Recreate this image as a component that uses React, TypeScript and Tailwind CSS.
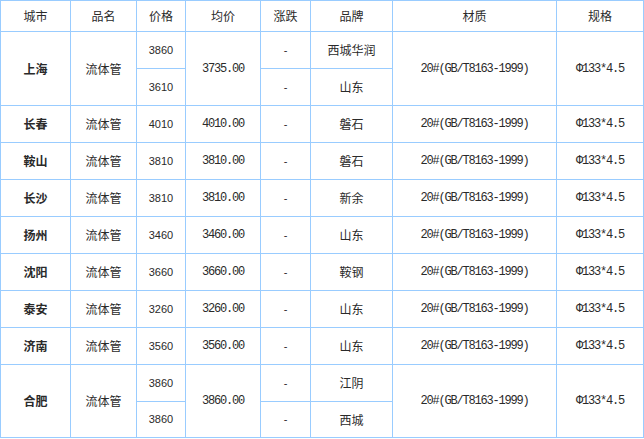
import React from "react";

type Row = {
  city: string;
  prices: string[];
  avg: string;
  brands: string[];
};

const rows: Row[] = [
  { city: "上海", prices: ["3860", "3610"], avg: "3735.00", brands: ["西城华润", "山东"] },
  { city: "长春", prices: ["4010"], avg: "4010.00", brands: ["磐石"] },
  { city: "鞍山", prices: ["3810"], avg: "3810.00", brands: ["磐石"] },
  { city: "长沙", prices: ["3810"], avg: "3810.00", brands: ["新余"] },
  { city: "扬州", prices: ["3460"], avg: "3460.00", brands: ["山东"] },
  { city: "沈阳", prices: ["3660"], avg: "3660.00", brands: ["鞍钢"] },
  { city: "泰安", prices: ["3260"], avg: "3260.00", brands: ["山东"] },
  { city: "济南", prices: ["3560"], avg: "3560.00", brands: ["山东"] },
  { city: "合肥", prices: ["3860", "3860"], avg: "3860.00", brands: ["江阴", "西城"] },
];

const cjk = "font-['Noto_Sans_CJK_SC',sans-serif]";
const mono = "font-['Liberation_Mono','Noto_Sans_CJK_SC',monospace] text-[12px] tracking-[-1.2px]";
const num = "font-['Liberation_Sans',sans-serif] text-[11px]";
const td = "border border-[#99ccff] text-center align-middle p-0";

export default function App() {
  return (
    <div className="bg-white w-[644px] h-[439px] text-[#2a2a2a]">
      <table className="table-fixed border-collapse w-[643px] text-[12px]">
        <colgroup>
          <col className="w-[70px]" />
          <col className="w-[66px]" />
          <col className="w-[49px]" />
          <col className="w-[75px]" />
          <col className="w-[50px]" />
          <col className="w-[82px]" />
          <col className="w-[164px]" />
          <col className="w-[87px]" />
        </colgroup>
        <thead>
          <tr className="h-[31px]">
            {["城市", "品名", "价格", "均价", "涨跌", "品牌", "材质", "规格"].map((h) => (
              <th key={h} className={`${td} ${cjk} font-normal`}>
                {h}
              </th>
            ))}
          </tr>
        </thead>
        <tbody>
          {rows.map((r, ri) => {
            const span = r.prices.length;
            const last = ri === rows.length - 1;
            const sub = r.prices.map((p, i) => (
              <tr key={`${r.city}-${i}`} className={last && i === span - 1 ? "h-[36px]" : "h-[37px]"}>
                {i === 0 && (
                  <>
                    <td rowSpan={span} className={`${td} ${cjk} font-bold`}>
                      {r.city}
                    </td>
                    <td rowSpan={span} className={`${td} ${cjk}`}>
                      流体管
                    </td>
                  </>
                )}
                <td className={`${td} ${num}`}>{p}</td>
                {i === 0 && (
                  <td rowSpan={span} className={`${td} ${mono}`}>
                    {r.avg}
                  </td>
                )}
                <td className={`${td} ${num}`}>-</td>
                <td className={`${td} ${cjk}`}>{r.brands[i]}</td>
                {i === 0 && (
                  <>
                    <td rowSpan={span} className={`${td} ${mono}`}>
                      20#(GB/T8163-1999)
                    </td>
                    <td rowSpan={span} className={`${td} ${mono}`}>
                      Φ133*4.5
                    </td>
                  </>
                )}
              </tr>
            ));
            return <React.Fragment key={r.city}>{sub}</React.Fragment>;
          })}
        </tbody>
      </table>
    </div>
  );
}
